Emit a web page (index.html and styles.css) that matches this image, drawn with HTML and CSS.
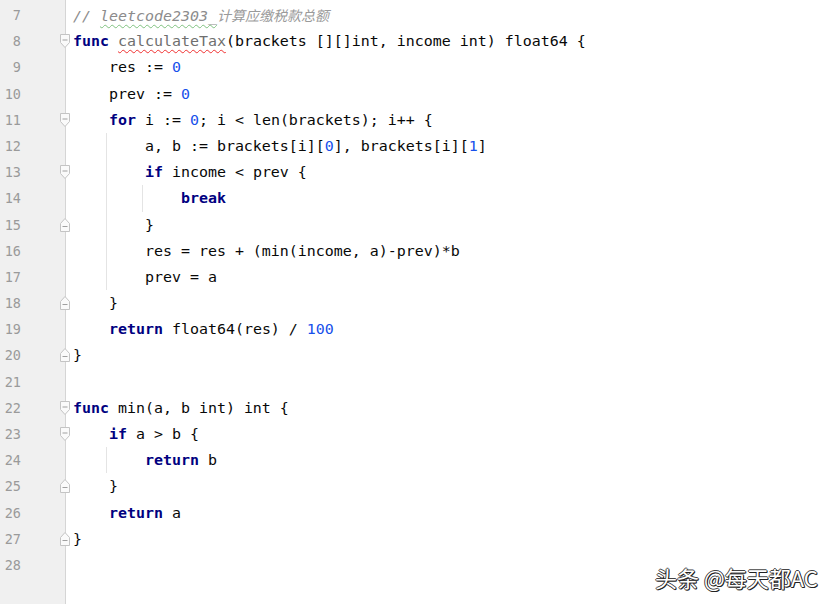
FILE: index.html
```html
<!DOCTYPE html>
<html>
<head>
<meta charset="utf-8">
<link rel="stylesheet" href="styles.css">
</head>
<body>
<div class="editor">
  <div class="gutter">
    <div class="ln">7</div><div class="ln">8</div><div class="ln">9</div><div class="ln">10</div>
    <div class="ln">11</div><div class="ln">12</div><div class="ln">13</div><div class="ln">14</div>
    <div class="ln">15</div><div class="ln">16</div><div class="ln">17</div><div class="ln">18</div>
    <div class="ln">19</div><div class="ln">20</div><div class="ln">21</div><div class="ln">22</div>
    <div class="ln">23</div><div class="ln">24</div><div class="ln">25</div><div class="ln">26</div>
    <div class="ln">27</div><div class="ln">28</div>
  </div>
  <div class="code">
    <div class="line"><span class="cm">// <span class="typo">leetcode2303_</span><span class="cjk">计算应缴税款总额</span></span></div>
    <div class="line"><svg class="fold" viewBox="0 0 10 14"><path class="fo" d="M0.5 0.5H9.5V8.5L5 13.5L0.5 8.5Z"/><path class="fd" d="M2.5 6H7.5"/></svg><span class="kw">func</span> <span class="unused err">calculateTax</span>(brackets [][]int, income int) float64 {</div>
    <div class="line">    res := <span class="num">0</span></div>
    <div class="line">    prev := <span class="num">0</span></div>
    <div class="line"><svg class="fold" viewBox="0 0 10 14"><path class="fo" d="M0.5 0.5H9.5V8.5L5 13.5L0.5 8.5Z"/><path class="fd" d="M2.5 6H7.5"/></svg>    <span class="kw">for</span> i := <span class="num">0</span>; i &lt; len(brackets); i++ {</div>
    <div class="line"><i class="guide g1"></i>        a, b := brackets[i][<span class="num">0</span>], brackets[i][<span class="num">1</span>]</div>
    <div class="line"><svg class="fold" viewBox="0 0 10 14"><path class="fo" d="M0.5 0.5H9.5V8.5L5 13.5L0.5 8.5Z"/><path class="fd" d="M2.5 6H7.5"/></svg><i class="guide g1"></i>        <span class="kw">if</span> income &lt; prev {</div>
    <div class="line"><i class="guide g1"></i><i class="guide g2"></i>            <span class="kw">break</span></div>
    <div class="line"><svg class="fold" viewBox="0 0 10 14"><path class="fo" d="M5 0.5L9.5 5.5V13.5H0.5V5.5Z"/><path class="fd" d="M2.5 8.5H7.5"/></svg><i class="guide g1"></i>        }</div>
    <div class="line"><i class="guide g1"></i>        res = res + (min(income, a)-prev)*b</div>
    <div class="line"><i class="guide g1"></i>        prev = a</div>
    <div class="line"><svg class="fold" viewBox="0 0 10 14"><path class="fo" d="M5 0.5L9.5 5.5V13.5H0.5V5.5Z"/><path class="fd" d="M2.5 8.5H7.5"/></svg>    }</div>
    <div class="line">    <span class="kw">return</span> float64(res) / <span class="num">100</span></div>
    <div class="line"><svg class="fold" viewBox="0 0 10 14"><path class="fo" d="M5 0.5L9.5 5.5V13.5H0.5V5.5Z"/><path class="fd" d="M2.5 8.5H7.5"/></svg>}</div>
    <div class="line"> </div>
    <div class="line"><svg class="fold" viewBox="0 0 10 14"><path class="fo" d="M0.5 0.5H9.5V8.5L5 13.5L0.5 8.5Z"/><path class="fd" d="M2.5 6H7.5"/></svg><span class="kw">func</span> min(a, b int) int {</div>
    <div class="line"><svg class="fold" viewBox="0 0 10 14"><path class="fo" d="M0.5 0.5H9.5V8.5L5 13.5L0.5 8.5Z"/><path class="fd" d="M2.5 6H7.5"/></svg>    <span class="kw">if</span> a &gt; b {</div>
    <div class="line"><i class="guide g1"></i>        <span class="kw">return</span> b</div>
    <div class="line"><svg class="fold" viewBox="0 0 10 14"><path class="fo" d="M5 0.5L9.5 5.5V13.5H0.5V5.5Z"/><path class="fd" d="M2.5 8.5H7.5"/></svg>    }</div>
    <div class="line">    <span class="kw">return</span> a</div>
    <div class="line"><svg class="fold" viewBox="0 0 10 14"><path class="fo" d="M5 0.5L9.5 5.5V13.5H0.5V5.5Z"/><path class="fd" d="M2.5 8.5H7.5"/></svg>}</div>
    <div class="line"> </div>
  </div>
  <div class="watermark">头条 @每天都AC</div>
</div>
</body>
</html>
```

FILE: styles.css
```css
html, body {
  margin: 0;
  padding: 0;
  background: #ffffff;
}

.editor {
  position: relative;
  display: flex;
  width: 839px;
  height: 604px;
  overflow: hidden;
  background: #ffffff;
}

.gutter {
  width: 65px;
  flex: none;
  background: #f0f0f0;
  border-right: 1px solid #d5d5d5;
  padding-top: 2px;
}

.ln {
  width: 21px;
  height: 26.2px;
  line-height: 26.2px;
  text-align: right;
  font-family: "DejaVu Sans Mono", monospace;
  font-size: 13.5px;
  color: #9a9a9a;
}

.code {
  flex: 1;
  padding-top: 2px;
  padding-left: 7px;
  font-family: "DejaVu Sans Mono", "Noto Sans CJK SC", monospace;
  font-size: 14.95px;
  color: #080808;
}

.line {
  position: relative;
  height: 26.2px;
  line-height: 26.2px;
  white-space: pre;
}

.kw {
  color: #000080;
  font-weight: bold;
}

.num {
  color: #1750eb;
}

.cm {
  color: #8c8c8c;
  font-style: italic;
}

.cjk {
  font-family: "Noto Sans CJK SC", sans-serif;
  font-size: 14px;
  font-style: italic;
  color: #9a9a9a;
}

.typo {
  text-decoration: underline wavy #7fc17f;
  text-decoration-thickness: 1px;
  text-underline-offset: 3px;
}

.unused {
  color: #6f6f6f;
}

.err {
  text-decoration: underline wavy #f03030;
  text-decoration-thickness: 1px;
  text-underline-offset: 3px;
}

.fold {
  position: absolute;
  left: -13px;
  top: 6px;
  width: 10px;
  height: 14px;
  z-index: 1;
}

.fo {
  fill: #fafafa;
  stroke: #c4c4c4;
  stroke-width: 1;
}

.fd {
  stroke: #a0a0a0;
  stroke-width: 1;
  fill: none;
}

.guide {
  position: absolute;
  top: 0;
  width: 1px;
  height: 100%;
  background: #e4e4e4;
}

.g1 {
  left: 33px;
}

.g2 {
  left: 69px;
}

.watermark {
  position: absolute;
  left: 655px;
  top: 561px;
  font-family: "Noto Sans CJK SC", sans-serif;
  font-size: 22px;
  color: #ffffff;
  text-shadow: 1px 1px 0 #222, -1px 0 0 #444, 0 -1px 0 #444, 1px 0 0 #333, 0 1px 0 #333;
  white-space: nowrap;
}
```
